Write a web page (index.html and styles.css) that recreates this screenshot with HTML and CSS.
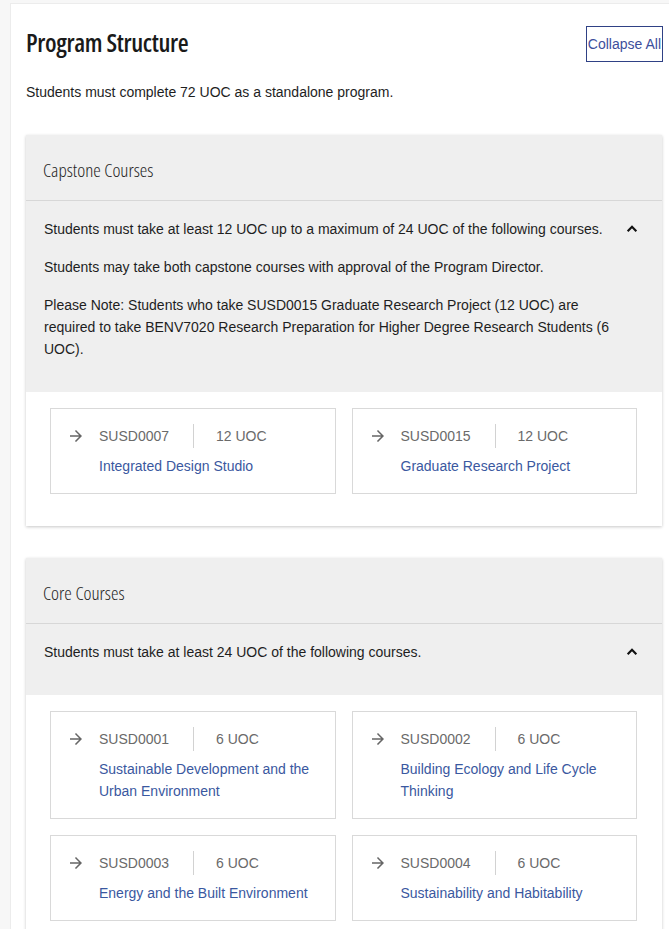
FILE: index.html
```html
<!DOCTYPE html>
<html lang="en">
<head>
<meta charset="utf-8">
<title>Program Structure</title>
<link rel="stylesheet" href="styles.css">
</head>
<body>
<div class="page">
  <section class="panel">
    <div class="panel-head">
      <h2 class="panel-title">Program Structure</h2>
      <button class="collapse-btn" type="button">Collapse All</button>
    </div>
    <p class="intro">Students must complete 72 UOC as a standalone program.</p>

    <div class="group">
      <div class="group-title">Capstone Courses</div>
      <div class="group-desc">
        <div class="desc-text">
          <p>Students must take at least 12 UOC up to a maximum of 24 UOC of the following courses.</p>
          <p>Students may take both capstone courses with approval of the Program Director.</p>
          <p>Please Note: Students who take SUSD0015 Graduate Research Project (12 UOC) are required to take BENV7020 Research Preparation for Higher Degree Research Students (6 UOC).</p>
        </div>
        <svg class="chevron" viewBox="0 0 24 24" width="20" height="20"><path d="M6.8 14.6L12 9.4l5.2 5.2"/></svg>
      </div>
      <div class="course-grid">
        <a class="course" href="#">
          <div class="course-meta">
            <svg class="arrow" viewBox="0 0 24 24" width="18" height="18"><path d="M12 4l-1.41 1.41L16.17 11H4v2h12.17l-5.58 5.59L12 20l8-8z"/></svg>
            <span class="code">SUSD0007</span>
            <span class="uoc">12 UOC</span>
          </div>
          <div class="course-name">Integrated Design Studio</div>
        </a>
        <a class="course" href="#">
          <div class="course-meta">
            <svg class="arrow" viewBox="0 0 24 24" width="18" height="18"><path d="M12 4l-1.41 1.41L16.17 11H4v2h12.17l-5.58 5.59L12 20l8-8z"/></svg>
            <span class="code">SUSD0015</span>
            <span class="uoc">12 UOC</span>
          </div>
          <div class="course-name">Graduate Research Project</div>
        </a>
      </div>
    </div>

    <div class="group">
      <div class="group-title">Core Courses</div>
      <div class="group-desc">
        <div class="desc-text">
          <p>Students must take at least 24 UOC of the following courses.</p>
        </div>
        <svg class="chevron" viewBox="0 0 24 24" width="20" height="20"><path d="M6.8 14.6L12 9.4l5.2 5.2"/></svg>
      </div>
      <div class="course-grid">
        <a class="course" href="#">
          <div class="course-meta">
            <svg class="arrow" viewBox="0 0 24 24" width="18" height="18"><path d="M12 4l-1.41 1.41L16.17 11H4v2h12.17l-5.58 5.59L12 20l8-8z"/></svg>
            <span class="code">SUSD0001</span>
            <span class="uoc">6 UOC</span>
          </div>
          <div class="course-name">Sustainable Development and the Urban Environment</div>
        </a>
        <a class="course" href="#">
          <div class="course-meta">
            <svg class="arrow" viewBox="0 0 24 24" width="18" height="18"><path d="M12 4l-1.41 1.41L16.17 11H4v2h12.17l-5.58 5.59L12 20l8-8z"/></svg>
            <span class="code">SUSD0002</span>
            <span class="uoc">6 UOC</span>
          </div>
          <div class="course-name">Building Ecology and Life Cycle Thinking</div>
        </a>
        <a class="course" href="#">
          <div class="course-meta">
            <svg class="arrow" viewBox="0 0 24 24" width="18" height="18"><path d="M12 4l-1.41 1.41L16.17 11H4v2h12.17l-5.58 5.59L12 20l8-8z"/></svg>
            <span class="code">SUSD0003</span>
            <span class="uoc">6 UOC</span>
          </div>
          <div class="course-name">Energy and the Built Environment</div>
        </a>
        <a class="course" href="#">
          <div class="course-meta">
            <svg class="arrow" viewBox="0 0 24 24" width="18" height="18"><path d="M12 4l-1.41 1.41L16.17 11H4v2h12.17l-5.58 5.59L12 20l8-8z"/></svg>
            <span class="code">SUSD0004</span>
            <span class="uoc">6 UOC</span>
          </div>
          <div class="course-name">Sustainability and Habitability</div>
        </a>
      </div>
    </div>
  </section>
</div>
</body>
</html>
```

FILE: styles.css
```css
html, body {
  margin: 0;
  padding: 0;
  overflow: hidden;
  background: #f7f7f7;
}

body {
  font-family: "Liberation Sans", Arial, sans-serif;
  font-size: 14px;
  color: #1e1e1e;
}

.page {
  padding: 3px 0 0 10px;
  width: 720px;
}

.panel {
  width: 636px;
  padding: 22px 15px 40px 15px;
  background: #ffffff;
  border-left: 1px solid #ececec;
  border-top: 1px solid #ececec;
}

.panel-head {
  display: flex;
  justify-content: space-between;
  align-items: center;
  height: 35px;
}

.panel-title {
  margin: 0 0 4px 0;
  font-family: "Open Sans", "DejaVu Sans Condensed", sans-serif;
  font-stretch: 75%;
  font-weight: 600;
  font-size: 25px;
  line-height: 30px;
  color: #1a1a1a;
  letter-spacing: -0.35px;
}

.collapse-btn {
  height: 36px;
  padding: 0 1px;
  margin-right: -1px;
  background: #fff;
  border: 1px solid #2f4185;
  color: #3d4f9c;
  font-family: "Liberation Sans", Arial, sans-serif;
  font-size: 14px;
}

.intro {
  margin: 20px 0 32px 0;
  line-height: 22px;
}

.group {
  background: #fff;
  box-shadow: 0 1px 3px rgba(0, 0, 0, 0.22);
  margin-bottom: 32px;
}

.group-title {
  background: #efefef;
  padding: 23px 17px 18px 17px;
  line-height: 24px;
  font-family: "Open Sans", "DejaVu Sans Condensed", sans-serif;
  font-stretch: 75%;
  font-weight: 300;
  font-size: 19px;
  color: #1e1e1e;
  border-bottom: 1px solid #d7d7d7;
}

.group-desc {
  background: #efefef;
  display: flex;
  align-items: flex-start;
  padding: 17px 20px 32px 18px;
}

.desc-text {
  flex: 1;
}

.desc-text p {
  margin: 0 0 16px 0;
  line-height: 22px;
}

.desc-text p:last-child {
  margin-bottom: 0;
}

.chevron {
  flex: none;
  margin-top: 1px;
  margin-left: 2px;
  fill: none;
  stroke: #111;
  stroke-width: 2.6;
}

.course-grid {
  display: grid;
  grid-template-columns: 1fr 1fr;
  gap: 16px;
  padding: 16px 25px 32px 24px;
}

.course {
  display: block;
  border: 1px solid #d9d9d9;
  padding: 16px 18px 16px 16px;
  text-decoration: none;
}

.course-meta {
  display: flex;
  align-items: center;
  height: 22px;
  color: #6a6a6a;
}

.arrow {
  flex: none;
  fill: #666;
  margin-right: 14px;
}

.code {
  padding-right: 24px;
  border-right: 1px solid #d2d2d2;
  line-height: 24px;
}

.uoc {
  padding-left: 22px;
}

.course-name {
  margin-top: 8px;
  margin-left: 32px;
  line-height: 22px;
  color: #3a58a0;
}
```
